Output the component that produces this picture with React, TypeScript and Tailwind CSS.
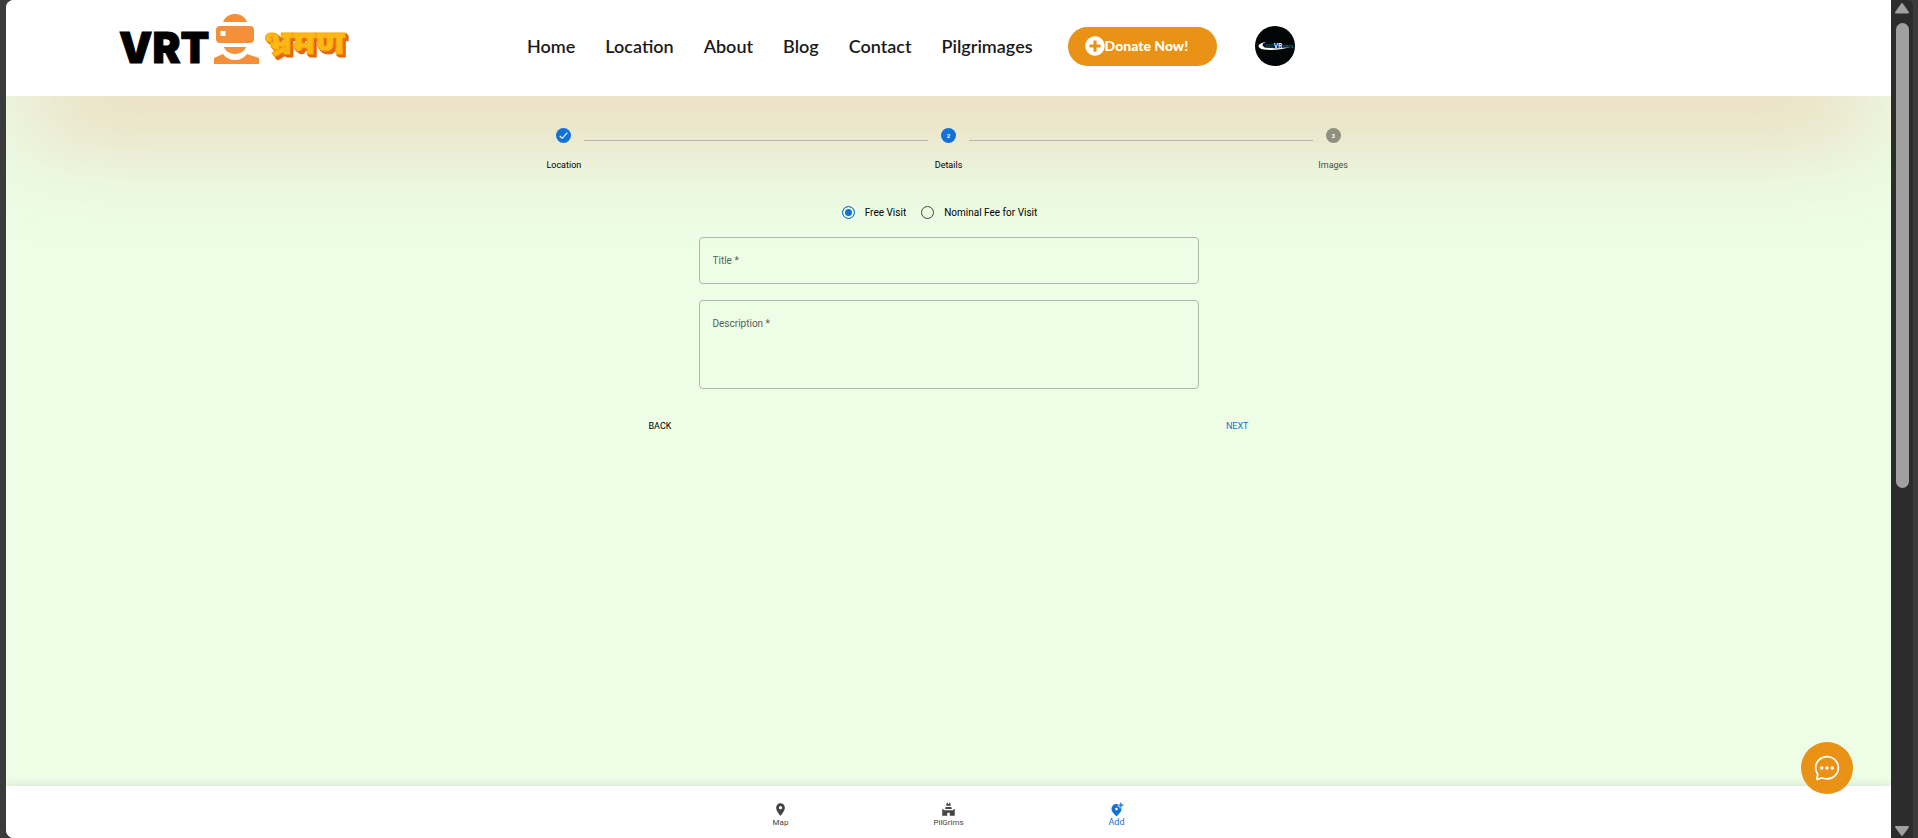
import React, { useState } from "react";
import { MdAddLocationAlt, MdLocationOn, MdTempleHindu } from "react-icons/md";
import { FaPlusCircle } from "react-icons/fa";
import { IoChatbubbleEllipsesOutline } from "react-icons/io5";

const NAV = ["Home", "Location", "About", "Blog", "Contact", "Pilgrimages"];

function Logo() {
  return (
    <a href="#" aria-label="VRT भ्रमण" className="block shrink-0">
      <svg viewBox="0 0 240 80" className="h-20 w-60 overflow-visible">
        <text x="1" y="63" fontFamily="Inter, sans-serif" fontWeight="900" fontSize="42" fill="#000" stroke="#000" strokeWidth="1">VRT</text>
        <g fill="#f5903a">
          <path d="M105 22c2-5.500 7-8 12-8s10 2.500 12 8z" />
          <path fillRule="evenodd" d="M102 26h30q4 0 4 4v9q0 4-4 4h-30q-4 0-4-4v-9q0-4 4-4zM102.500 31v5h5v-5z" />
          <path d="M106 47h22c-1 4-6 7-11 7s-10-3-11-7z" />
          <path d="M96 64v-6l9-4c3 4 7 6 12 6s9-2 12-6l12 4v6z" />
        </g>
        <text
          x="146"
          y="54"
          fontFamily="'Noto Sans', 'Noto Sans Devanagari', sans-serif"
          fontWeight="900"
          fontSize="34"
          fill="#fdb913"
          stroke="#f7a80d"
          strokeWidth="1"
          className="[filter:drop-shadow(1px_1px_0_#e8650f)_drop-shadow(1px_1px_0_#e8650f)_drop-shadow(1px_1px_0_#e8650f)]"
        >
          भ्रमण
        </text>
      </svg>
    </a>
  );
}

function Header() {
  return (
    <header className="relative z-10 flex h-24 items-start bg-white pl-28 shadow-[0_50px_100px_-20px_rgba(232,140,100,0.5)]">
      <Logo />
      <nav className="ml-[169px] flex h-[92px] items-center gap-[30px] whitespace-nowrap font-[Lato,sans-serif] text-lg font-semibold text-[#1a1a1a]">
        {NAV.map((n) => (
          <a key={n} href="#">{n}</a>
        ))}
        <button className="ml-[5px] flex h-[39px] w-[149px] items-center rounded-full bg-[#ea9215] pl-[17px] text-sm font-black text-white">
          <FaPlusCircle className="size-5" />
          Donate Now!
        </button>
        <a href="#" aria-label="Profile" className="ml-2">
          <svg viewBox="0 0 40 40" className="size-10">
            <circle cx="20" cy="20" r="20" fill="#020606" />
            <path d="M11 16C2 17.500 1 22 9 23.500c8 1.200 18 0 26-2.500-10 1.200-18 1.800-24 .5-5-1.500-4-4 0-5.500z" fill="#fff" />
            <text x="9" y="21.500" fontFamily="Inter, sans-serif" fontSize="6" fontWeight="700">
              <tspan fill="#17506b" fontSize="5">360</tspan>
              <tspan fill="#fff">VR</tspan>
              <tspan fill="#1b6f94" fontSize="4">Tours</tspan>
            </text>
          </svg>
        </a>
      </nav>
    </header>
  );
}

type StepProps = { label: string; n: number; state: "done" | "active" | "todo"; first?: boolean; last?: boolean };

function Step({ label, n, state, first, last }: StepProps) {
  const todo = state === "todo";
  return (
    <li className="flex flex-1 flex-col items-center">
      <div className="flex w-full items-start">
        <span className={first ? "flex-1" : "mt-3 h-px flex-1 bg-[#b3b4ac]"} />
        <span className={`mx-[13px] flex size-[15px] items-center justify-center rounded-full text-[6px] font-bold text-white ${todo ? "bg-[#8e9082]" : "bg-[#1272d6]"}`}>
          {state === "done" ? (
            <svg viewBox="0 0 16 16" className="size-[15px]">
              <path d="M4 8.500 6.800 11 12 5" fill="none" stroke="#fff" strokeWidth="1.200" />
            </svg>
          ) : (
            n
          )}
        </span>
        <span className={last ? "flex-1" : "mt-3 h-px flex-1 bg-[#b3b4ac]"} />
      </div>
      <span className={`mt-[14px] text-[9px] leading-4 ${todo ? "text-[#4a4e45]" : "text-black"}`}>{label}</span>
    </li>
  );
}

function Radio({ label, checked, onChange }: { label: string; checked: boolean; onChange: () => void }) {
  return (
    <label className="flex items-center gap-[10px]">
      <input
        type="radio"
        name="fee"
        checked={checked}
        onChange={onChange}
        className="size-[13px] appearance-none rounded-full border border-[#444] checked:border-[#1272d6] checked:bg-[#1272d6] checked:shadow-[inset_0_0_0_2px_#edfde6]"
      />
      {label}
    </label>
  );
}

const TABS = [
  { t: "Map", I: MdLocationOn, on: false },
  { t: "PilGrims", I: MdTempleHindu, on: false },
  { t: "Add", I: MdAddLocationAlt, on: true },
];

export default function App() {
  const [free, setFree] = useState(true);
  const field = "block w-full resize-none rounded border border-[#acbba8] bg-transparent px-[13px] text-[10px] outline-none placeholder:text-[#5a6157]";
  return (
    <div className="flex h-screen bg-[#3b3b3b] pl-[6px] font-[Roboto,sans-serif]">
      <div className="relative flex min-w-0 flex-1 flex-col overflow-hidden rounded-l-lg bg-[#edfde6]">
        <Header />
        <main className="relative z-20 flex flex-1 flex-col items-center pt-8">
          <ol className="flex w-full max-w-[1154px]">
            <Step label="Location" n={1} state="done" first />
            <Step label="Details" n={2} state="active" />
            <Step label="Images" n={3} state="todo" last />
          </ol>
          <form className="mt-[31px] flex w-[600px] flex-col" onSubmit={(e) => e.preventDefault()}>
            <div className="flex h-4 items-center justify-center gap-[15px] pr-[18px] text-[10px]">
              <Radio label="Free Visit" checked={free} onChange={() => setFree(true)} />
              <Radio label="Nominal Fee for Visit" checked={!free} onChange={() => setFree(false)} />
            </div>
            <div className="mt-[17px] flex flex-col gap-4 px-[50px]">
              <input aria-label="Title" placeholder="Title *" className={`${field} h-[47px]`} />
              <textarea aria-label="Description" placeholder="Description *" className={`${field} h-[89px] pt-[15px]`} />
            </div>
            <div className="mt-[29px] flex justify-between text-[9px] leading-4">
              <button type="button" className="text-black">BACK</button>
              <button type="submit" className="text-[#1272d6]">NEXT</button>
            </div>
          </form>
        </main>
        <footer className="z-20 flex h-[52px] justify-center bg-white pt-[5px] shadow-[0_0_10px_rgba(0,0,0,0.12)]">
          {TABS.map(({ t, I, on }) => (
            <a
              key={t}
              href="#"
              className={`flex w-[168px] flex-col items-center justify-center leading-[11px] ${on ? "text-[9px] text-[#1272d6]" : "text-[8px] text-[#444]"}`}
            >
              <I className="size-[15px]" />
              {t}
            </a>
          ))}
        </footer>
        <button aria-label="Chat" className="absolute right-[38px] bottom-11 z-30 flex size-[52px] items-center justify-center rounded-full bg-[#ea9215] text-white">
          <IoChatbubbleEllipsesOutline className="size-7" />
        </button>
      </div>
      <div className="flex w-[22px] flex-col items-center rounded-tr-md bg-[#2c2c2c]">
        <svg viewBox="0 0 16 12" className="mt-[2px] h-3 w-4">
          <path d="M8 2 14 10.500H2z" fill="#a0a0a0" stroke="#a0a0a0" strokeWidth="2" strokeLinejoin="round" />
        </svg>
        <div className="mt-[9px] h-[465px] w-[13px] rounded-full bg-[#a0a0a0]" />
        <svg viewBox="0 0 16 12" className="mt-auto mb-px h-3 w-4">
          <path d="M8 10 14 2H2z" fill="#a0a0a0" stroke="#a0a0a0" strokeWidth="2" strokeLinejoin="round" />
        </svg>
      </div>
      <div className="w-[5px]" />
    </div>
  );
}
